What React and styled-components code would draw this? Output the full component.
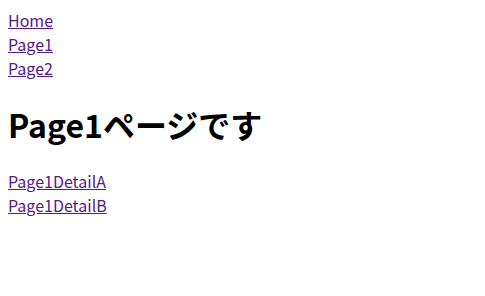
import React from 'react';
import styled, { createGlobalStyle } from 'styled-components';

const GlobalStyle = createGlobalStyle`
  body {
    margin: 8px;
    font-family: "Noto Sans CJK JP", "Noto Sans", sans-serif;
    background: #fff;
    color: #000;
  }
`;

const Nav = styled.nav`
  display: flex;
  flex-direction: column;
  align-items: flex-start;
`;

const NavLink = styled.a`
  color: #551a8b;
  text-decoration: underline;
  font-size: 16px;
  line-height: 24px;
`;

const Title = styled.h1`
  font-size: 32px;
  font-weight: 700;
  margin: 21.44px 0;
  line-height: 46px;
`;

function App() {
  return (
    <>
      <GlobalStyle />
      <Nav>
        <NavLink href="#">Home</NavLink>
        <NavLink href="#">Page1</NavLink>
        <NavLink href="#">Page2</NavLink>
      </Nav>
      <Title>Page1ページです</Title>
      <Nav>
        <NavLink href="#">Page1DetailA</NavLink>
        <NavLink href="#">Page1DetailB</NavLink>
      </Nav>
    </>
  );
}

export default App;
